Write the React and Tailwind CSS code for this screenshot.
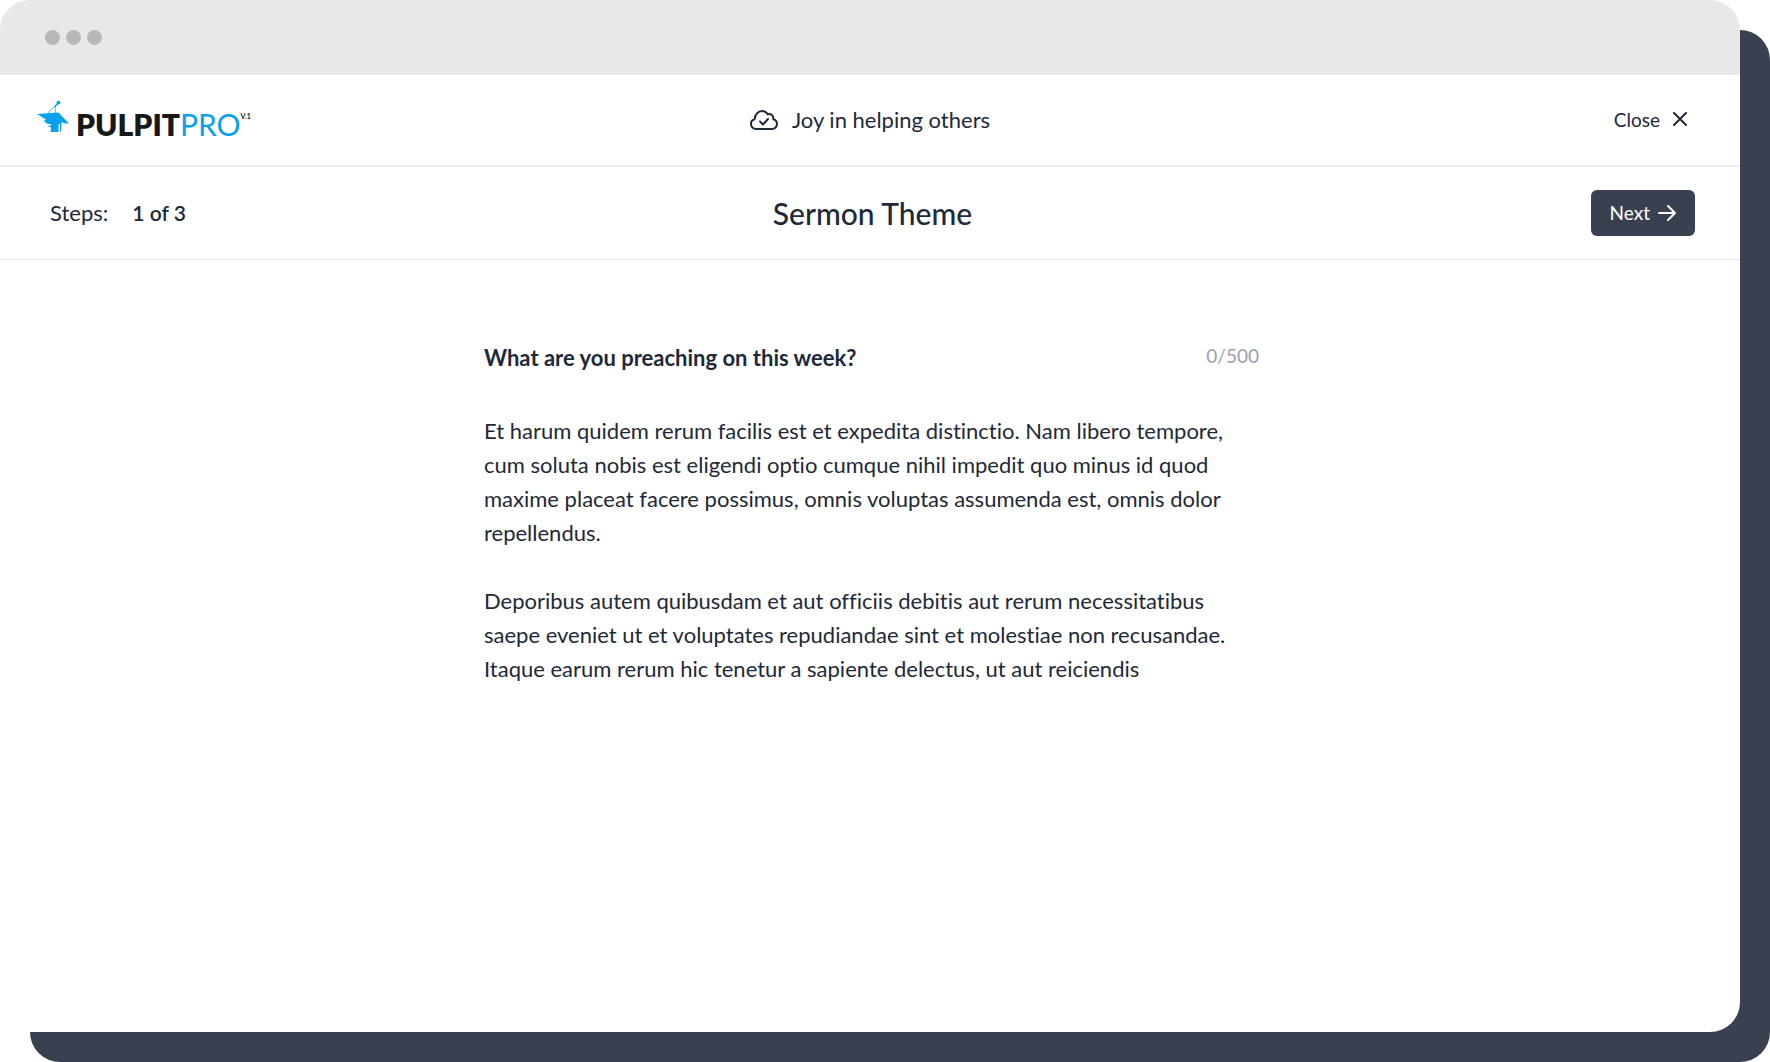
import React from "react";

const sermon = `Et harum quidem rerum facilis est et expedita distinctio. Nam libero tempore, cum soluta nobis est eligendi optio cumque nihil impedit quo minus id quod maxime placeat facere possimus, omnis voluptas assumenda est, omnis dolor repellendus.

Deporibus autem quibusdam et aut officiis debitis aut rerum necessitatibus saepe eveniet ut et voluptates repudiandae sint et molestiae non recusandae. Itaque earum rerum hic tenetur a sapiente delectus, ut aut reiciendis`;

function PulpitIcon() {
  return (
    <svg width="34" height="34" viewBox="0 0 34 34" fill="none" aria-hidden="true">
      <path d="M1 14 22.500 12.500 33 23.500 29 23.500 24 21.500 7 21.500 10 19.500Z" fill="#09a0ec" />
      <path d="M9.500 21H25.500V24L25 31.500H24V24H22.500V32H15V31.200H13.500V30.500H15V27.500L11.500 26V25.400L15 25.800V24.500L9.500 23Z" fill="#09a0ec" />
      <path d="M12 14C13 10 17 8 20 5.500M19 13C20 10.500 18.500 9 19.500 6" stroke="#09a0ec" strokeWidth="0.8" />
      <path d="M19 6.500 22 3" stroke="#09a0ec" strokeWidth="1.400" />
      <circle cx="22.500" cy="2.600" r="1.900" fill="#09a0ec" />
    </svg>
  );
}

function CloudCheckIcon() {
  return (
    <svg width="28" height="20" viewBox="0 0 28 20" fill="none" stroke="#1f2937" strokeWidth="2" strokeLinecap="round" strokeLinejoin="round" aria-hidden="true">
      <path d="M6 19a5 5 0 0 1-1.400-9.800C5 4.500 8 1 12 1c2.800 0 4.600 1.200 5.700 3.300 3.200-1 6.100 1.500 5.600 4.900A5 5 0 0 1 22 19Z" />
      <path d="m10 11.500 3 3 5-5.500" />
    </svg>
  );
}

export default function App() {
  return (
    <div className="flex min-h-screen flex-col bg-white pr-[30px] pb-[30px] font-['Lato',sans-serif] text-gray-800 [font-variant-ligatures:none]">
      <div className="flex flex-1 flex-col rounded-[30px] bg-white shadow-[30px_30px_0_0_#394151]">
        <div className="flex h-[75px] items-center gap-[6px] rounded-t-[30px] bg-[#e8e8e8] px-[45px]">
          <span className="size-[15px] rounded-full bg-[#b8b8b8]" />
          <span className="size-[15px] rounded-full bg-[#b8b8b8]" />
          <span className="size-[15px] rounded-full bg-[#b8b8b8]" />
        </div>

        <header className="grid h-[92px] grid-cols-[1fr_auto_1fr] items-center border-b-2 border-[#eeeef0] px-9">
          <a href="#home" className="flex items-start pt-1" aria-label="PulpitPro v.1">
            <PulpitIcon />
            <span className="mt-1 ml-[6px] text-[30px] leading-10 font-extrabold text-[#181818]">PULPIT</span>
            <span className="mt-1 text-[30px] leading-10 text-[#09a0ec]">PRO</span>
            <span className="mt-2 text-[7px] leading-4 font-bold text-[#181818]">V.1</span>
          </a>
          <div className="flex items-center gap-[14px]">
            <CloudCheckIcon />
            <span className="text-[22px] leading-8">Joy in helping others</span>
          </div>
          <button type="button" className="mr-4 flex items-center gap-2 justify-self-end text-[19px] leading-7">
            Close
            <svg width="20" height="16" viewBox="0 0 20 16" fill="none" stroke="#1f2937" strokeWidth="2" strokeLinecap="round" aria-hidden="true">
              <path d="m6 1 12 12M18 1 6 13" />
            </svg>
          </button>
        </header>

        <section className="grid h-[93px] grid-cols-[1fr_auto_1fr] items-center border-b border-[#e2e4e8] pr-[45px] pl-[50px]">
          <p className="flex items-baseline gap-6 text-[22px] leading-8">
            <span>Steps:</span>
            <span className="text-[21px] font-semibold">1 of 3</span>
          </p>
          <h1 className="text-[30px] leading-9 font-medium">Sermon Theme</h1>
          <button type="button" className="flex h-[46px] items-center gap-2 justify-self-end rounded-[6px] bg-[#394151] px-[19px] text-[19px] leading-7 text-white">
            Next
            <svg width="18" height="16" viewBox="0 0 18 16" fill="none" stroke="white" strokeWidth="2" strokeLinecap="round" strokeLinejoin="round" aria-hidden="true">
              <path d="M1 8h16M10 1l7 7-7 7" />
            </svg>
          </button>
        </section>

        <main className="mx-auto w-full max-w-[778px] flex-1 pt-20 pl-[3px]">
          <div className="flex items-start justify-between">
            <label htmlFor="sermon" className="text-[22px] leading-9 font-bold">What are you preaching on this week?</label>
            <span className="text-[19px] leading-8 text-gray-400">0/500</span>
          </div>
          <textarea
            id="sermon"
            rows={8}
            defaultValue={sermon}
            className="mt-[38px] block w-full resize-none overflow-hidden bg-transparent text-[22px] leading-[34px] outline-none [font-variant-ligatures:none]"
          />
        </main>
      </div>
    </div>
  );
}
